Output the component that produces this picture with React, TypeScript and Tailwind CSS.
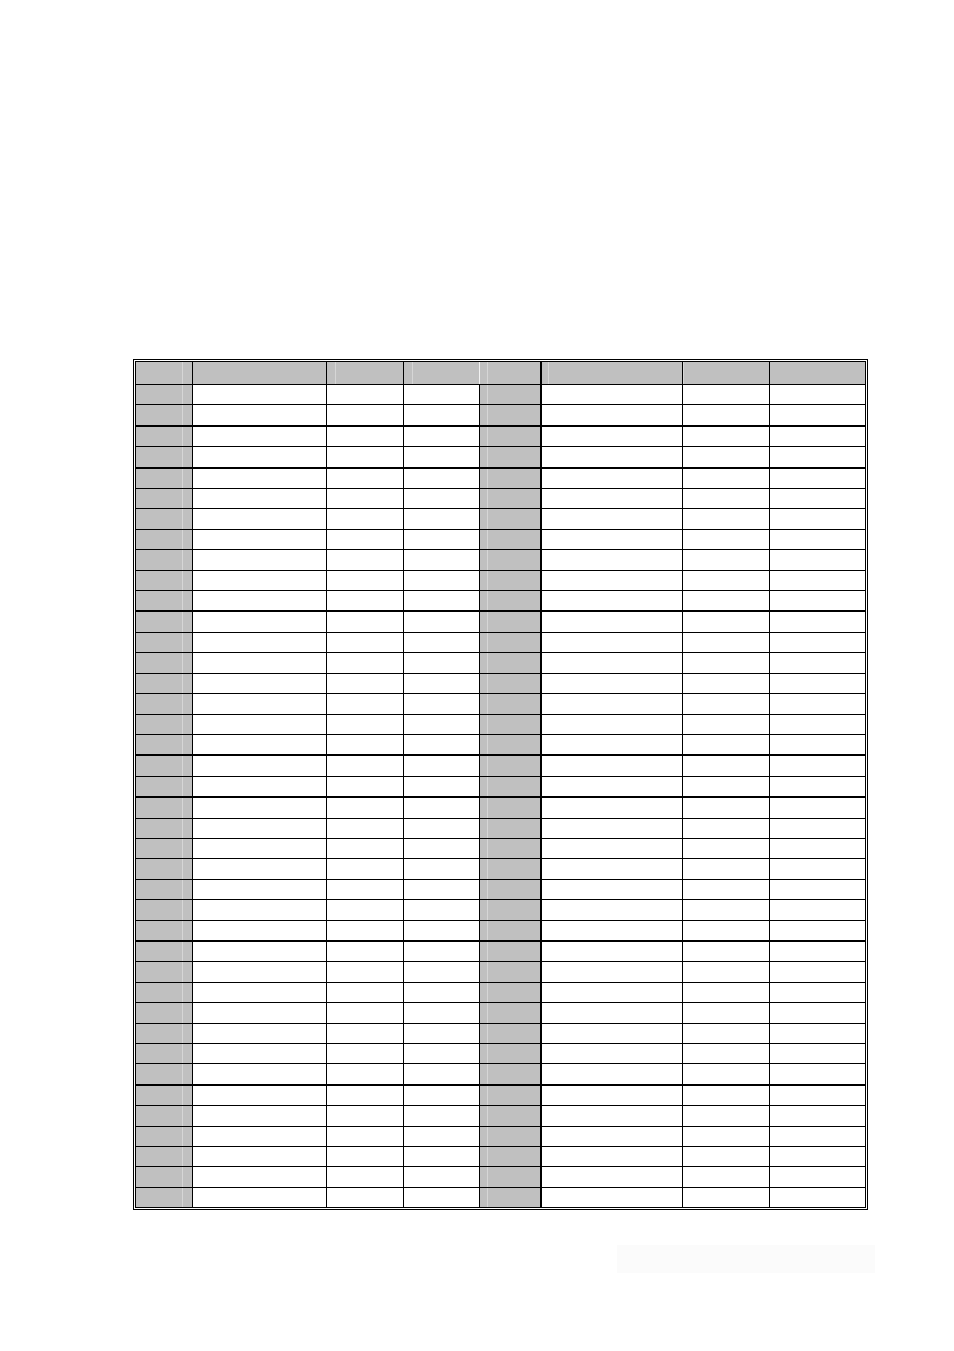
const columns = [
  { key: "no1", className: "border-r border-black bg-[#c0c0c0]", mark: "ml-[46px]" },
  { key: "name1", className: "border-r border-black bg-white", mark: "" },
  { key: "a1", className: "border-r border-black bg-white", mark: "" },
  { key: "b1", className: "border-r border-black bg-white", mark: "" },
  { key: "no2", className: "border-r-2 border-black bg-[#c0c0c0]", mark: "ml-[7px]" },
  { key: "name2", className: "border-r border-black bg-white", mark: "" },
  { key: "a2", className: "border-r border-black bg-white", mark: "" },
  { key: "b2", className: "bg-white", mark: "" },
];

const headerCells = [
  { key: "h1", className: "border-r border-black", mark: "ml-[46px]" },
  { key: "h2", className: "border-r border-black", mark: "" },
  { key: "h3", className: "border-r border-black", mark: "ml-[8px]" },
  { key: "h4", className: "border-r border-[#f2f2f2]", mark: "ml-[8px]" },
  { key: "h5", className: "border-r-2 border-black", mark: "ml-[7px]" },
  { key: "h6", className: "border-r border-black", mark: "ml-[6px]" },
  { key: "h7", className: "border-r border-black", mark: "ml-0" },
  { key: "h8", className: "", mark: "" },
];

// rows that close a group get a heavier rule underneath
const thickAfter = [2, 4, 11, 18, 20, 27, 34];
const rows = Array.from({ length: 40 }, (_, i) => i + 1);

const gridCols = "grid grid-cols-[57px_134px_77px_76px_62px_141px_87px_95px]";

function Mark({ at }: { at: string }) {
  if (!at) return null;
  return <div className={`${at} h-full w-0 border-l border-[#d6d6d6]`} />;
}

export default function App() {
  return (
    <div className="flex h-[1351px] w-[954px] flex-col bg-white pl-[133px] pt-[359px] font-['Liberation_Sans',sans-serif]">
      <div className="h-[851px] w-[735px] border-[3px] border-double border-black">
        <div className="flex h-full flex-col">
          <div className={`${gridCols} h-[23px] shrink-0 border-b border-black bg-[#c0c0c0]`}>
            {headerCells.map((c) => (
              <div key={c.key} className={`h-full ${c.className}`}>
                <Mark at={c.mark} />
              </div>
            ))}
          </div>
          {rows.map((n) => {
            const rule =
              n === 40 ? "" : thickAfter.includes(n) ? "border-b-2 border-black" : "border-b border-black";
            return (
              <div key={n} className={`${gridCols} min-h-0 flex-1 ${rule}`}>
                {columns.map((c) => (
                  <div key={c.key} className={`h-full ${c.className}`}>
                    <Mark at={c.mark} />
                  </div>
                ))}
              </div>
            );
          })}
        </div>
      </div>
      <div className="ml-[484px] mt-[35px] h-[28px] w-[258px] bg-[#fbfbfb]" />
    </div>
  );
}
